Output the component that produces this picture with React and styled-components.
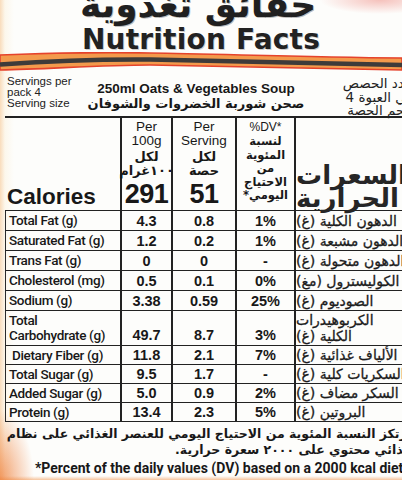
import React from "react";
import styled, { createGlobalStyle } from "styled-components";

const GlobalStyle = createGlobalStyle`
  html, body { margin: 0; padding: 0; background: #fdfdfb; }
  body { width: 402px; height: 480px; overflow: hidden; }
`;

const Page = styled.div`
  width: 402px;
  height: 480px;
  overflow: hidden;
  display: flex;
  flex-direction: column;
  color: #181818;
  background:
    radial-gradient(ellipse 34px 70px at 0px 480px, rgba(238, 128, 60, 0.75), rgba(238, 128, 60, 0) 100%),
    radial-gradient(ellipse 60px 14px at 380px 0px, rgba(236, 120, 110, 0.45), rgba(236, 120, 110, 0) 100%),
    linear-gradient(0deg, rgba(240, 150, 80, 0.55) 0px, rgba(240, 150, 80, 0) 4px),
    linear-gradient(90deg, rgba(244, 180, 110, 0.45) 0px, rgba(250, 230, 190, 0.25) 5px, rgba(255, 255, 255, 0) 14px),
    #fdfdfb;
`;

const ArabicTitle = styled.div`
  font-family: "DejaVu Sans", sans-serif;
  font-weight: 700;
  font-size: 36px;
  line-height: 30px;
  margin-top: -10px;
  text-align: center;
  direction: rtl;
  color: #202020;
  padding-right: 6px;
  text-shadow: 1px 1px 0 rgba(0, 0, 0, 0.25);
`;

const Title = styled.h1`
  margin: 6px 0 0;
  font-family: "DejaVu Sans", sans-serif;
  font-weight: 700;
  font-size: 28px;
  line-height: 28px;
  text-align: center;
  color: #222;
  letter-spacing: 0.2px;
  text-shadow: 1px 1px 0 rgba(0, 0, 0, 0.2);
`;

const Wave = styled.svg`
  display: block;
  margin-top: -2px;
  flex: none;
`;

const HeaderRow = styled.div`
  box-sizing: border-box;
  display: grid;
  grid-template-columns: 80px 1fr 110px;
  width: 412px;
  height: 46px;
  margin-left: 5px;
  border-bottom: 2px solid #222;
  flex: none;
`;

const ServingsEn = styled.div`
  font-family: "Liberation Sans", sans-serif;
  font-size: 11.5px;
  line-height: 11px;
  padding: 4px 0 0 2px;
  color: #222;
  white-space: nowrap;
`;

const Product = styled.div`
  text-align: center;
  padding-top: 10px;
`;

const ProductEn = styled.div`
  font-family: "Liberation Sans", sans-serif;
  font-weight: 700;
  font-size: 13.5px;
  line-height: 14px;
  white-space: nowrap;
`;

const ProductAr = styled.div`
  font-family: "DejaVu Sans", sans-serif;
  font-weight: 700;
  font-size: 13px;
  line-height: 16px;
  direction: rtl;
  white-space: nowrap;
`;

const ServingsAr = styled.div`
  font-family: "DejaVu Sans", sans-serif;
  font-size: 13.5px;
  line-height: 13.5px;
  direction: rtl;
  text-align: right;
  padding: 5px 4px 0 0;
  white-space: nowrap;
  color: #222;
`;

const Grid = styled.div`
  display: grid;
  grid-template-columns: 117px 51px 64px 59px 125px;
  grid-template-rows: 93px repeat(5, 20px) 35px repeat(4, 19px);
  width: 416px;
  margin-left: 5px;
  flex: none;
`;

const Cell = styled.div`
  box-sizing: border-box;
  display: flex;
  min-width: 0;
  border-bottom: 1.5px solid #222;
  border-right: ${(p) => (p.$last ? "none" : "2px solid #222")};
  border-left: ${(p) => (p.$first ? "1.5px solid #2a2a2a" : "none")};
`;

const CaloriesCell = styled(Cell)`
  align-items: flex-end;
  padding: 0 0 1px 2px;
  font-family: "Liberation Sans", sans-serif;
  font-weight: 700;
  font-size: 22.5px;
  line-height: 24px;
`;

const PerCell = styled(Cell)`
  flex-direction: column;
  align-items: center;
  padding: 2px 0 3px;
  text-align: center;
`;

const PerEn = styled.div`
  font-family: "Liberation Sans", sans-serif;
  font-size: 13.5px;
  line-height: 13.5px;
  white-space: nowrap;
`;

const PerAr = styled.div`
  font-family: "DejaVu Sans", sans-serif;
  font-weight: 700;
  font-size: 13px;
  line-height: 14px;
  direction: rtl;
  white-space: nowrap;
  margin-top: ${(p) => (p.$gap ? "3px" : "0")};
`;

const BigNum = styled.div`
  margin-top: auto;
  font-family: "Liberation Sans", sans-serif;
  font-weight: 700;
  font-size: 27px;
  line-height: 26px;
  letter-spacing: -0.5px;
`;

const DvHeadCell = styled(Cell)`
  flex-direction: column;
  align-items: center;
  padding-top: 3px;
  text-align: center;
`;

const DvHeadEn = styled.div`
  font-family: "Liberation Sans", sans-serif;
  font-size: 12px;
  line-height: 12px;
`;

const DvHeadAr = styled.div`
  font-family: "DejaVu Sans", sans-serif;
  font-weight: 700;
  font-size: 11.5px;
  line-height: 13.5px;
  direction: rtl;
  margin-top: 2px;
`;

const ArHeadCell = styled(Cell)`
  flex-direction: column;
  justify-content: flex-end;
  align-items: flex-end;
  padding: 0 4px 0 0;
  font-family: "DejaVu Sans", sans-serif;
  font-weight: 700;
  font-size: 26px;
  line-height: 23px;
  direction: rtl;
  color: #262626;
  white-space: nowrap;
`;

const LabelCell = styled(Cell)`
  flex-direction: column;
  justify-content: center;
  align-items: flex-start;
  padding-left: ${(p) => (p.$indent ? "6px" : "3px")};
  font-family: "Roboto", "Liberation Sans", sans-serif;
  font-weight: 500;
  font-size: 13.5px;
  line-height: 15px;
  letter-spacing: -0.35px;
  white-space: nowrap;
`;

const NumCell = styled(Cell)`
  align-items: ${(p) => (p.$tall ? "flex-end" : "center")};
  justify-content: center;
  padding-bottom: ${(p) => (p.$tall ? "2px" : "0")};
  font-family: "Liberation Sans", sans-serif;
  font-weight: 700;
  font-size: 14.5px;
  line-height: 16px;
`;

const ArCell = styled(Cell)`
  flex-direction: column;
  justify-content: center;
  align-items: flex-end;
  padding-right: 3px;
  font-family: "DejaVu Sans", sans-serif;
  font-size: 14px;
  line-height: 16px;
  direction: rtl;
  white-space: nowrap;
  color: #1c1c1c;
  -webkit-text-stroke: 0.3px #1c1c1c;
`;

const Foot = styled.div`
  width: 412px;
  margin-top: 4px;
  font-family: "DejaVu Sans", sans-serif;
  font-weight: 700;
  font-size: 12.5px;
  line-height: 16px;
  direction: rtl;
  text-align: right;
  white-space: nowrap;
  flex: none;
`;

const FootEn = styled.div`
  margin-top: 2px;
  padding-left: 35px;
  font-family: "Roboto", "Liberation Sans", sans-serif;
  font-weight: 700;
  font-size: 14px;
  line-height: 17px;
  white-space: nowrap;
`;

const rows = [
  { en: ["Total Fat (g)"], a: "4.3", b: "0.8", dv: "1%", ar: ["الدهون الكلية (غ)"] },
  { en: ["Saturated Fat (g)"], a: "1.2", b: "0.2", dv: "1%", ar: ["الدهون مشبعة (غ)"] },
  { en: ["Trans Fat (g)"], a: "0", b: "0", dv: "-", ar: ["الدهون متحولة (غ)"] },
  { en: ["Cholesterol (mg)"], a: "0.5", b: "0.1", dv: "0%", ar: ["الكوليسترول (مغ)"] },
  { en: ["Sodium (g)"], a: "3.38", b: "0.59", dv: "25%", ar: ["الصوديوم (غ)"] },
  { en: ["Total", "Carbohydrate (g)"], a: "49.7", b: "8.7", dv: "3%", ar: ["الكربوهيدرات", "الكلية (غ)"], tall: true },
  { en: ["Dietary Fiber (g)"], a: "11.8", b: "2.1", dv: "7%", ar: ["الألياف غذائية (غ)"], indent: true },
  { en: ["Total Sugar (g)"], a: "9.5", b: "1.7", dv: "-", ar: ["السكريات كلية (غ)"] },
  { en: ["Added Sugar (g)"], a: "5.0", b: "0.9", dv: "2%", ar: ["السكر مضاف (غ)"] },
  { en: ["Protein (g)"], a: "13.4", b: "2.3", dv: "5%", ar: ["البروتين (غ)"] },
];

export default function App() {
  return (
    <Page>
      <GlobalStyle />
      <ArabicTitle>حقائق تغذوية</ArabicTitle>
      <Title>Nutrition Facts</Title>
      <Wave width="402" height="20" viewBox="0 0 402 20">
        <path
          d="M0,3 C50,1 100,0 150,1 C220,2 300,5 402,6 L402,18 C300,16 220,14 150,13 C100,13 50,17 0,18 Z"
          fill="#f39a4c"
          stroke="#e5432c"
          strokeWidth="1.6"
        />
        <path
          d="M0,12.5 C50,9 100,7 150,7.5 C220,9 300,11 402,13"
          fill="none"
          stroke="#3e3b3a"
          strokeWidth="4.5"
        />
      </Wave>
      <HeaderRow>
        <ServingsEn>
          Servings per
          <br />
          pack 4
          <br />
          Serving size
        </ServingsEn>
        <Product>
          <ProductEn>250ml Oats &amp; Vegetables Soup</ProductEn>
          <ProductAr>صحن شوربة الخضروات والشوفان</ProductAr>
        </Product>
        <ServingsAr>
          عدد الحصص
          <br />
          في العبوة 4
          <br />
          حجم الحصة
        </ServingsAr>
      </HeaderRow>
      <Grid>
        <CaloriesCell>Calories</CaloriesCell>
        <PerCell>
          <PerEn>Per</PerEn>
          <PerEn>100g</PerEn>
          <PerAr $gap>لكل</PerAr>
          <PerAr>١٠٠غرام</PerAr>
          <BigNum>291</BigNum>
        </PerCell>
        <PerCell>
          <PerEn>Per</PerEn>
          <PerEn>Serving</PerEn>
          <PerAr $gap>لكل</PerAr>
          <PerAr>حصة</PerAr>
          <BigNum>51</BigNum>
        </PerCell>
        <DvHeadCell>
          <DvHeadEn>%DV*</DvHeadEn>
          <DvHeadAr>
            لنسبة
            <br />
            المئوية
            <br />
            من
            <br />
            الاحتياج
            <br />
            اليومي*
          </DvHeadAr>
        </DvHeadCell>
        <ArHeadCell $last>
          <span>السعرات</span>
          <span>الحرارية</span>
        </ArHeadCell>
        {rows.map((r, i) => (
          <React.Fragment key={i}>
            <LabelCell $first $indent={r.indent}>
              {r.en.map((t, j) => (
                <span key={j}>{t}</span>
              ))}
            </LabelCell>
            <NumCell $tall={r.tall}>{r.a}</NumCell>
            <NumCell $tall={r.tall}>{r.b}</NumCell>
            <NumCell $tall={r.tall}>{r.dv}</NumCell>
            <ArCell $last>
              {r.ar.map((t, j) => (
                <span key={j}>{t}</span>
              ))}
            </ArCell>
          </React.Fragment>
        ))}
      </Grid>
      <Foot>
        <div>ترتكز النسبة المئوية من الاحتياج اليومي للعنصر الغذائي على نظام</div>
        <div>غذائي محتوي على ٢٠٠٠ سعرة حرارية.</div>
      </Foot>
      <FootEn>*Percent of the daily values (DV) based on a 2000 kcal diet</FootEn>
    </Page>
  );
}
